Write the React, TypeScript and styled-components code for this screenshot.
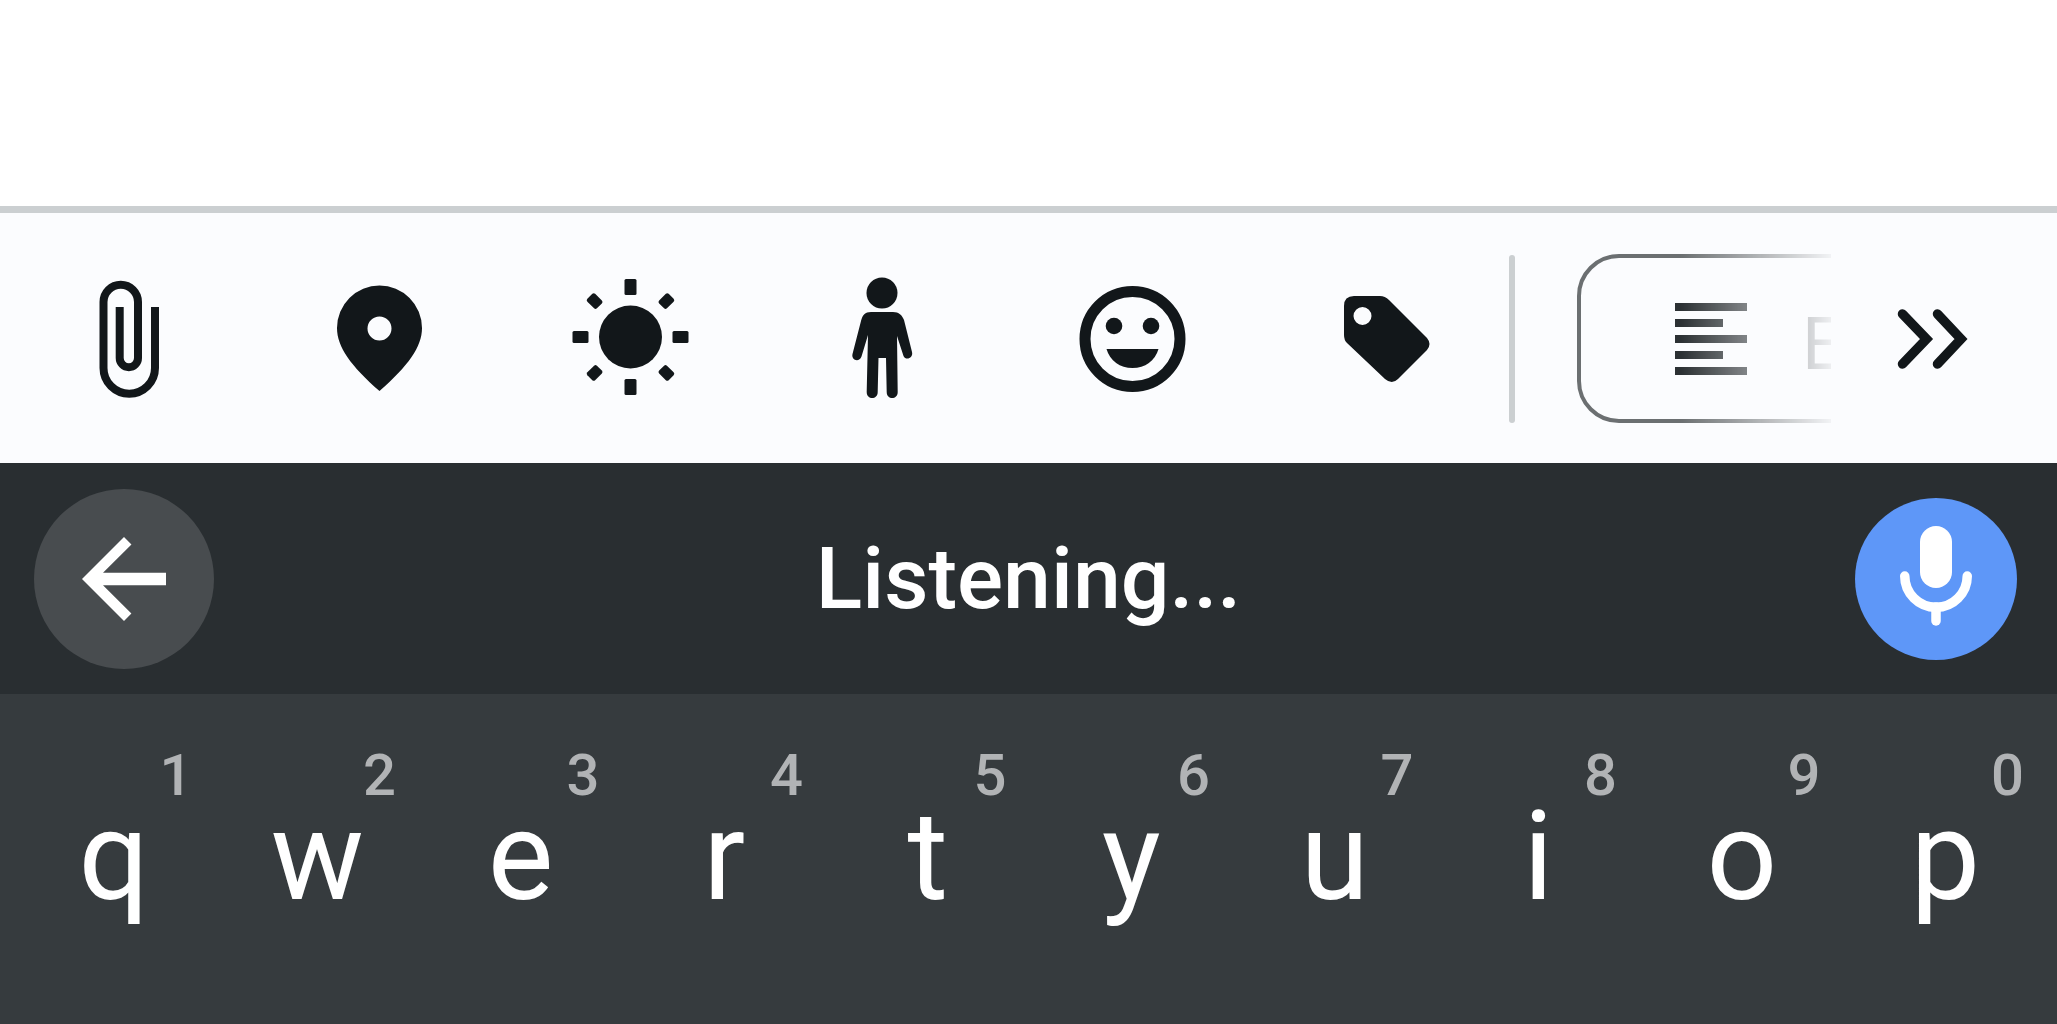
import React from 'react';
import styled, { createGlobalStyle } from 'styled-components';

const GlobalStyle = createGlobalStyle`
  *, *::before, *::after {
    box-sizing: border-box;
  }
  body {
    margin: 0;
    font-family: Roboto, 'Liberation Sans', sans-serif;
  }
  button {
    margin: 0;
    padding: 0;
    border: 0;
    background: none;
    color: inherit;
    font: inherit;
    cursor: pointer;
  }
`;

const Page = styled.div`
  display: flex;
  flex-direction: column;
  min-height: 100vh;
  background: #ffffff;
  overflow: hidden;
`;

const NoteArea = styled.main`
  min-height: 206px;
`;

const Toolbar = styled.div`
  display: flex;
  align-items: center;
  padding: 41px 22px 40px 4px;
  border-top: 7px solid #cbcfd1;
  background: #fbfcfe;
  color: #12171a;
`;

const IconGroup = styled.div`
  flex: 1;
  display: grid;
  grid-template-columns: repeat(6, 1fr);
  justify-items: center;
`;

const IconButton = styled.button`
  display: flex;
  align-items: center;
  justify-content: center;
  flex-shrink: 0;
`;

const Icon = styled.svg<{ $size: number }>`
  display: block;
  flex-shrink: 0;
  width: ${(p) => p.$size}px;
  height: ${(p) => p.$size}px;
`;

const Divider = styled.div`
  width: 6px;
  height: 168px;
  border-radius: 3px;
  background: #cbcfd1;
`;

const ChipScroller = styled.div`
  display: flex;
  width: 254px;
  margin-left: 62px;
  overflow: hidden;
  mask-image: linear-gradient(to right, #000 104px, transparent 264px);
`;

const Chip = styled.button`
  display: flex;
  align-items: center;
  flex-shrink: 0;
  height: 169px;
  padding: 0 82px;
  border: 4px solid #6b6f71;
  border-radius: 42px;
  color: #2b3033;
  font-size: 72px;
  line-height: 84px;
`;

const ChipContent = styled.span`
  display: flex;
  align-items: flex-end;
  gap: 43px;
`;

const MoreButton = styled(IconButton)`
  margin-left: 38px;
  margin-right: 38px;
`;

const VoiceBar = styled.div`
  display: grid;
  grid-template-columns: 1fr auto 1fr;
  align-items: center;
  padding: 26px 34px 25px;
  background: #292e31;
  color: #ffffff;
`;

const RoundButton = styled.button<{ $size: number; $fill: string }>`
  display: flex;
  align-items: center;
  justify-content: center;
  width: ${(p) => p.$size}px;
  height: ${(p) => p.$size}px;
  border-radius: 50%;
  background: ${(p) => p.$fill};
`;

const MicButton = styled(RoundButton)`
  justify-self: end;
  margin-right: 6px;
`;

const Status = styled.p`
  margin: 0;
  font-size: 86px;
  font-weight: 500;
  line-height: 104px;
`;

const Keyboard = styled.div`
  flex: 1;
  display: grid;
  grid-template-columns: repeat(10, 1fr);
  align-content: start;
  padding: 55px 10px 40px 12px;
  background: #363b3e;
`;

const Key = styled.button`
  display: flex;
  flex-direction: column;
  align-items: stretch;
`;

const Hint = styled.span`
  padding-right: 23px;
  color: #b1b3b5;
  font-size: 58px;
  font-weight: 500;
  line-height: 52px;
  text-align: right;
`;

const Letter = styled.span`
  color: #ffffff;
  font-size: 124px;
  line-height: 112px;
  text-align: center;
`;

const PaperclipIcon = () => (
  <Icon $size={128} viewBox="0 0 128 128" fill="none" stroke="currentColor" strokeWidth="8" aria-hidden="true">
    <path d="M90 32V93a25.75 25.75 0 0 1-51.5 0V27a17.25 17.25 0 0 1 34.5 0V83a9.15 9.15 0 0 1-18.3 0V32" />
  </Icon>
);

const PinIcon = () => (
  <Icon $size={128} viewBox="0 0 128 128" fill="currentColor" fillRule="evenodd" aria-hidden="true">
    <path d="M63.5 116C35 91 21 72 21 53A42.5 42.5 0 0 1 106 53C106 72 92 91 63.5 116ZM63.5 41.5a12 12 0 1 0 0 24a12 12 0 1 0 0-24Z" />
  </Icon>
);

const SunIcon = () => (
  <Icon $size={128} viewBox="0 0 128 128" fill="currentColor" aria-hidden="true">
    <circle cx="63.5" cy="62" r="31.5" />
    {[0, 90, 180, 270].map((a) => (
      <rect key={a} x="57.5" y="4" width="12" height="16" rx="1.5" transform={`rotate(${a} 63.5 62)`} />
    ))}
    {[45, 135, 225, 315].map((a) => (
      <rect key={a} x="58" y="4.5" width="11" height="13.5" rx="2" transform={`rotate(${a} 63.5 62)`} />
    ))}
  </Icon>
);

const PersonIcon = () => (
  <Icon $size={128} viewBox="0 0 128 128" fill="currentColor" aria-hidden="true">
    <circle cx="64" cy="18" r="15.5" />
    <path d="M53 37H75C81 37 84 40 86 45L94 77C95.5 83 88 86 85.5 81L79 61 79.7 117C79.7 125 68.7 125 68.7 117L68 83H60.5L59.7 117C59.7 125 48.7 125 48.7 117L50 60 43.5 81.5C41 88 33 85 34.5 79L43 46C44.5 40 47 37 53 37Z" />
  </Icon>
);

const SmileIcon = () => (
  <Icon $size={128} viewBox="0 0 128 128" fill="currentColor" aria-hidden="true">
    <circle cx="63.5" cy="64" r="47.5" fill="none" stroke="currentColor" strokeWidth="11" />
    <circle cx="45" cy="51" r="8.3" />
    <circle cx="82" cy="51" r="8.3" />
    <path d="M37.5 74H89.5C86 86 76 93 63.5 93S41 86 37.5 74Z" />
  </Icon>
);

const TagIcon = () => (
  <Icon $size={128} viewBox="0 0 128 128" fill="currentColor" fillRule="evenodd" aria-hidden="true">
    <path d="M34 21H60Q65 21 69 25L107 63Q112 69 107 75L78 104Q72 110 65 104L27 68Q24 65 24 60V31Q24 21 34 21ZM42.5 32a9 9 0 1 0 0 18a9 9 0 1 0 0-18Z" />
  </Icon>
);

const AlignLeftIcon = () => (
  <Icon $size={96} viewBox="0 0 24 24" fill="currentColor" aria-hidden="true">
    <path d="M15 15H3v2h12v-2zm0-8H3v2h12V7zM3 13h18v-2H3v2zm0 8h18v-2H3v2zM3 3v2h18V3H3z" />
  </Icon>
);

const DoubleChevronIcon = () => (
  <Icon $size={128} viewBox="0 0 128 128" fill="none" stroke="currentColor" strokeWidth="9.5" strokeLinecap="round" aria-hidden="true">
    <path d="M33.5 39L57.5 64 33.500 89M68.5 39L92 64 68.500 89" />
  </Icon>
);

const BackIcon = () => (
  <Icon $size={126} viewBox="0 0 24 24" fill="currentColor" aria-hidden="true">
    <path d="M20 10.800H8L13.420 5.410 12 4l-8 8 8 8 1.410-1.410L8 13.200H20v-2.400z" />
  </Icon>
);

const MicIcon = () => (
  <Icon $size={162} viewBox="0 0 162 162" fill="none" stroke="currentColor" strokeLinecap="round" aria-hidden="true">
    <rect x="65" y="28" width="32" height="62" rx="16" fill="currentColor" stroke="none" />
    <path d="M49.75 78a31.25 31.25 0 0 0 62.5 0" strokeWidth="9.5" />
    <path d="M81 109V123" strokeWidth="9.5" />
  </Icon>
);

const tools = [
  { label: 'Attach', Glyph: PaperclipIcon },
  { label: 'Location', Glyph: PinIcon },
  { label: 'Weather', Glyph: SunIcon },
  { label: 'Activity', Glyph: PersonIcon },
  { label: 'Mood', Glyph: SmileIcon },
  { label: 'Tag', Glyph: TagIcon },
];

const keys = ['q', 'w', 'e', 'r', 't', 'y', 'u', 'i', 'o', 'p'];

export default function App() {
  return (
    <>
      <GlobalStyle />
      <Page>
        <NoteArea />
        <Toolbar role="toolbar">
          <IconGroup>
            {tools.map(({ label, Glyph }) => (
              <IconButton key={label} type="button" aria-label={label}>
                <Glyph />
              </IconButton>
            ))}
          </IconGroup>
          <Divider />
          <ChipScroller>
            <Chip type="button">
              <ChipContent>
                <AlignLeftIcon />
                <span>E</span>
              </ChipContent>
            </Chip>
          </ChipScroller>
          <MoreButton type="button" aria-label="More">
            <DoubleChevronIcon />
          </MoreButton>
        </Toolbar>
        <VoiceBar>
          <RoundButton type="button" aria-label="Back" $size={180} $fill="#484c4f">
            <BackIcon />
          </RoundButton>
          <Status role="status">Listening...</Status>
          <MicButton type="button" aria-label="Microphone" $size={162} $fill="#5e97f8">
            <MicIcon />
          </MicButton>
        </VoiceBar>
        <Keyboard>
          {keys.map((letter, i) => (
            <Key key={letter} type="button">
              <Hint>{(i + 1) % 10}</Hint>
              <Letter>{letter}</Letter>
            </Key>
          ))}
        </Keyboard>
      </Page>
    </>
  );
}
